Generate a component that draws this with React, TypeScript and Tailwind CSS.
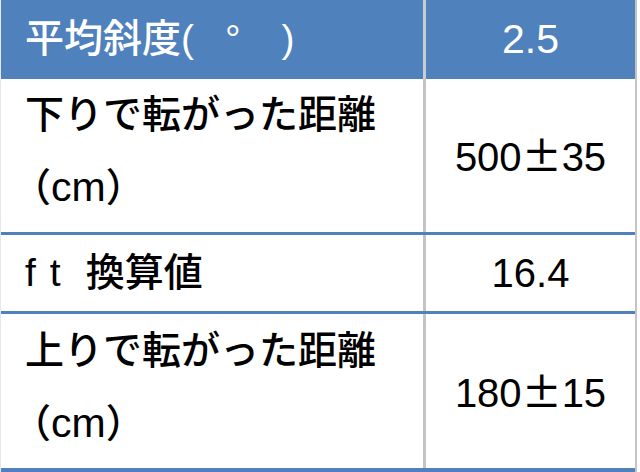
const font = "font-['Liberation_Sans','Noto_Sans_CJK_JP',sans-serif]";

type Row = {
  label: React.ReactNode[];
  value: string;
  height: string;
  pad: string;
};

function Pm() {
  return <span className="font-['Noto_Sans_CJK_JP',sans-serif]">±</span>;
}

function Cm() {
  return (
    <span className="-ml-[13px]">
      （<span className="text-[41px]">cm</span>）
    </span>
  );
}

const rows: Row[] = [
  {
    label: ["下りで転がった距離", <Cm key="cm" />],
    value: "500",
    height: "h-[156px] border-b-[3px]",
    pad: "pb-[8px]",
  },
  {
    label: [
      <span key="ft">
        f<span className="ml-[14px]">t</span>
        <span className="ml-[25px]">換算値</span>
      </span>,
    ],
    value: "16.4",
    height: "h-[79px] border-b-[3px]",
    pad: "",
  },
  {
    label: ["上りで転がった距離", <Cm key="cm" />],
    value: "180",
    height: "h-[158px] border-b-4",
    pad: "pb-[8px]",
  },
];

const tails: Record<string, string> = { "500": "35", "180": "15" };

export default function App() {
  return (
    <div className={`w-[640px] h-[472px] overflow-hidden bg-white text-black ${font}`}>
      <div className="w-[637px] h-full border-l border-[#e3e8f0] border-r-2 border-r-[#c4c4c4] flex flex-col">
        <div className="h-[79px] shrink-0 bg-[#4f81bd] grid grid-cols-[425px_1fr] text-white font-medium">
          <div className="flex items-center pl-6 text-[39px] border-r-[3px] border-[#c9ccd3]">
            <span>平均斜度(</span>
            <span className="ml-[31px]">°</span>
            <span className="ml-[41px]">)</span>
          </div>
          <div className="flex items-center justify-center text-[41px]">2.5</div>
        </div>
        {rows.map((row) => (
          <div
            key={row.value}
            className={`${row.height} shrink-0 grid grid-cols-[425px_1fr] border-[#4f81bd] font-medium`}
          >
            <div
              className={`flex flex-col justify-center pl-6 ${row.pad} text-[39px] leading-[72px] border-r-[3px] border-[#c4c4c4]`}
            >
              {row.label.map((line, i) => (
                <div key={i}>{line}</div>
              ))}
            </div>
            <div className="flex items-center justify-center text-[40px]">
              {tails[row.value] ? (
                <span>
                  {row.value}
                  <Pm />
                  {tails[row.value]}
                </span>
              ) : (
                row.value
              )}
            </div>
          </div>
        ))}
      </div>
    </div>
  );
}
